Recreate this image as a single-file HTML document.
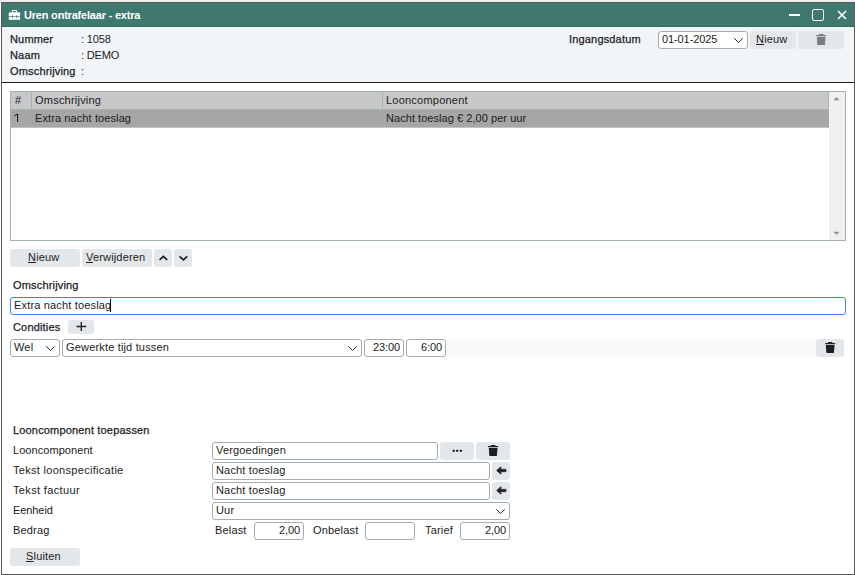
<!DOCTYPE html>
<html><head><meta charset="utf-8">
<style>
*{box-sizing:border-box;margin:0;padding:0}
html,body{width:855px;height:575px;overflow:hidden;background:#fff;font-family:"Liberation Sans",sans-serif;font-size:11px;color:#1b1b22;letter-spacing:0.17px}
.a{position:absolute}
.t{position:absolute;white-space:pre;line-height:14px;height:14px}
.m{-webkit-text-stroke:0.25px currentColor}
.btn{position:absolute;background:#e3e7ea;border-radius:3px}
.inp{position:absolute;background:#fff;border:1px solid #a3acb3;border-radius:3px}
.u{text-decoration:underline;text-underline-offset:1px}
</style></head><body>
<div class="a" style="left:0;top:0;width:855px;height:2px;background:#edf0f2"></div>
<!-- window -->
<div class="a" style="left:1px;top:2px;width:854px;height:573px;border:1px solid #5a5a5a;background:#fff"></div>
<!-- title bar -->
<div class="a" style="left:2px;top:3px;width:852px;height:24px;background:#3e786f;border-bottom:1px solid #356a61"></div>
<svg class="a" style="left:8px;top:9px" width="14" height="12" viewBox="0 0 14 12">
  <path d="M3.8 3.4V1.8Q3.8 1 4.6 1H8.2Q9 1 9 1.8V3.4H7.9V2.1H4.9V3.4z" fill="#fff"/>
  <path d="M0.8 4.6Q0.8 3.3 2.1 3.3H10.8Q12.1 3.3 12.1 4.6V7.2H0.8z" fill="#fff"/>
  <path d="M0.8 7.9H12.1V10.8H0.8z" fill="#fff"/>
  <rect x="4" y="6" width="0.85" height="2.9" rx="0.4" fill="#3e786f"/>
  <rect x="8" y="6" width="0.85" height="2.9" rx="0.4" fill="#3e786f"/>
</svg>
<div class="t" style="left:24px;top:8px;color:#fff;font-weight:bold;letter-spacing:-0.2px">Uren ontrafelaar - extra</div>
<div class="a" style="left:789px;top:14px;width:11px;height:2px;background:#fff"></div>
<div class="a" style="left:812px;top:9px;width:12px;height:12px;border:1.6px solid #fff;border-radius:2px"></div>
<svg class="a" style="left:837px;top:10px" width="10" height="10" viewBox="0 0 10 10"><path d="M1 1L9 9M9 1L1 9" stroke="#fff" stroke-width="1.6"/></svg>
<!-- header -->
<div class="a" style="left:2px;top:27px;width:852px;height:55px;background:#f2f5f8"></div>
<div class="a" style="left:2px;top:82px;width:852px;height:1px;background:#1f1f1f"></div>
<div class="t m" style="left:10px;top:32px">Nummer</div>
<div class="t m" style="left:10px;top:48px">Naam</div>
<div class="t m" style="left:10px;top:64px">Omschrijving</div>
<div class="t" style="left:81px;letter-spacing:-0.15px;top:32px">: 1058</div>
<div class="t" style="left:81px;letter-spacing:-0.15px;top:48px">: DEMO</div>
<div class="t" style="left:81px;letter-spacing:-0.15px;top:64px">:</div>
<div class="t m" style="left:569px;top:32px">Ingangsdatum</div>
<div class="inp" style="left:658px;top:31px;width:90px;height:18px"></div>
<div class="t" style="left:662px;top:32px;letter-spacing:-0.1px">01-01-2025</div>
<svg class="a" style="left:733px;top:37px" width="11" height="7" viewBox="0 0 11 7"><path d="M1.3 1.3L5.5 5.6L9.7 1.3" stroke="#2a2a2a" stroke-width="1" fill="none"/></svg>
<div class="btn" style="left:750px;top:31px;width:46px;height:18px"></div>
<div class="t" style="left:756px;top:32px"><span class="u">N</span>ieuw</div>
<div class="btn" style="left:798px;top:31px;width:46px;height:18px"></div>
<svg class="a" style="left:815px;top:33px" width="13" height="13" viewBox="0 0 13 13"><path d="M4.6 1H7.7Q8.3 1 8.5 1.6L8.7 2.1H11.1V3.2H1.2V2.1H3.6L3.8 1.6Q4 1 4.6 1z" fill="#787e86"/><path d="M1.8 3.9H10.5L10 11.3Q9.95 12 9.3 12H3Q2.35 12 2.3 11.3z" fill="#787e86"/></svg>

<!-- grid -->
<div class="a" style="left:10px;top:91px;width:836px;height:150px;border:1px solid #a3b1ba;background:#fff"></div>
<div class="a" style="left:11px;top:92px;width:818px;height:17px;background:#c8c8c8"></div>
<div class="a" style="left:11px;top:109px;width:818px;height:1px;background:#a3b1ba"></div>
<div class="a" style="left:31px;top:92px;width:1px;height:17px;background:#a3b1ba"></div>
<div class="a" style="left:382px;top:92px;width:1px;height:17px;background:#a3b1ba"></div>
<div class="a" style="left:828px;top:92px;width:1px;height:17px;background:#a3b1ba"></div>
<div class="a" style="left:11px;top:110px;width:818px;height:17px;background:#a6a6a6"></div>
<div class="a" style="left:11px;top:127px;width:818px;height:1px;background:#bcc5ca"></div>
<div class="a" style="left:829px;top:92px;width:16px;height:148px;background:#f0f0f0"></div>
<svg class="a" style="left:833px;top:96px" width="7" height="5" viewBox="0 0 7 5"><path d="M0.5 4.2L3.5 1L6.5 4.2z" fill="#8f8f8f"/></svg>
<svg class="a" style="left:833px;top:231px" width="7" height="5" viewBox="0 0 7 5"><path d="M0.5 0.8L3.5 4L6.5 0.8z" fill="#8f8f8f"/></svg>
<div class="t" style="left:15px;top:93px">#</div>
<div class="t" style="left:35px;top:93px;letter-spacing:0.22px">Omschrijving</div>
<div class="t" style="left:386px;top:93px;letter-spacing:0.22px">Looncomponent</div>
<svg class="a" style="left:13px;top:113px" width="7" height="10" viewBox="0 0 7 10"><path d="M4 1H5.1V9H4z" fill="#1b1b22"/><path d="M1.3 2.9L4.3 1.1" stroke="#1b1b22" stroke-width="1"/></svg>
<div class="t" style="left:35px;top:111px;letter-spacing:0.1px">Extra nacht toeslag</div>
<div class="t" style="left:386px;top:111px;letter-spacing:0.05px">Nacht toeslag € 2,00 per uur</div>
<!-- buttons row -->
<div class="btn" style="left:10px;top:249px;width:70px;height:18px"></div>
<div class="t" style="left:28px;top:250px"><span class="u">N</span>ieuw</div>
<div class="btn" style="left:82px;top:249px;width:70px;height:18px"></div>
<div class="t" style="left:86px;top:250px"><span class="u">V</span>erwijderen</div>
<div class="btn" style="left:154px;top:249px;width:18px;height:18px"></div>
<svg class="a" style="left:158px;top:254px" width="10" height="8" viewBox="0 0 10 8"><path d="M1.6 5.9L5.4 2.3 9.2 5.9" stroke="#1b1b22" stroke-width="1.7" fill="none"/></svg>
<div class="btn" style="left:174px;top:249px;width:18px;height:18px"></div>
<svg class="a" style="left:178px;top:254px" width="10" height="8" viewBox="0 0 10 8"><path d="M1.6 2.3L5.4 5.9 9.2 2.3" stroke="#1b1b22" stroke-width="1.7" fill="none"/></svg>
<!-- omschrijving -->
<div class="t m" style="left:13px;top:278px">Omschrijving</div>
<div class="a" style="left:10px;top:297px;width:836px;height:18px;border:1px solid #3b82f6;border-radius:3px;background:#fff"></div>
<div class="t" style="left:14px;top:298px">Extra nacht toeslag</div>
<div class="a" style="left:110px;top:299px;width:1px;height:13px;background:#000"></div>
<!-- condities -->
<div class="t m" style="left:13px;top:320px">Condities</div>
<div class="btn" style="left:68px;top:320px;width:26px;height:14px"></div>
<svg class="a" style="left:76px;top:322px" width="11" height="10" viewBox="0 0 11 10"><path d="M5.3 0.1v8.9M0.6 4.5h9.6" stroke="#1b1b22" stroke-width="1.35"/></svg>
<div class="a" style="left:446px;top:339px;width:370px;height:18px;background:#f8f9fa"></div>
<div class="inp" style="left:10px;top:339px;width:50px;height:18px"></div>
<div class="t" style="left:14px;top:340px">Wel</div>
<svg class="a" style="left:45px;top:345px" width="11" height="7" viewBox="0 0 11 7"><path d="M1.3 1.3L5.5 5.6L9.7 1.3" stroke="#2a2a2a" stroke-width="1" fill="none"/></svg>
<div class="inp" style="left:62px;top:339px;width:300px;height:18px"></div>
<div class="t" style="left:66px;top:340px">Gewerkte tijd tussen</div>
<svg class="a" style="left:347px;top:345px" width="11" height="7" viewBox="0 0 11 7"><path d="M1.3 1.3L5.5 5.6L9.7 1.3" stroke="#2a2a2a" stroke-width="1" fill="none"/></svg>
<div class="inp" style="left:364px;top:339px;width:40px;height:18px"></div>
<div class="t" style="left:364px;top:340px;width:36px;text-align:right;letter-spacing:-0.1px">23:00</div>
<div class="inp" style="left:406px;top:339px;width:40px;height:18px"></div>
<div class="t" style="left:406px;top:340px;width:36px;text-align:right;letter-spacing:-0.1px">6:00</div>
<div class="btn" style="left:816px;top:339px;width:28px;height:18px"></div>
<svg class="a" style="left:824px;top:341px" width="13" height="13" viewBox="0 0 13 13"><path d="M4.6 1H7.7Q8.3 1 8.5 1.6L8.7 2.1H11.1V3.2H1.2V2.1H3.6L3.8 1.6Q4 1 4.6 1z" fill="#1c1f24"/><path d="M1.8 3.9H10.5L10 11.3Q9.95 12 9.3 12H3Q2.35 12 2.3 11.3z" fill="#1c1f24"/></svg>
<!-- looncomponent toepassen -->
<div class="t m" style="left:13px;top:423px">Looncomponent toepassen</div>
<div class="t" style="left:13px;top:443px;letter-spacing:0.06px">Looncomponent</div>
<div class="t" style="left:13px;top:463px;letter-spacing:0.3px">Tekst loonspecificatie</div>
<div class="t" style="left:13px;top:483px;letter-spacing:0.35px">Tekst factuur</div>
<div class="t" style="left:13px;top:503px;letter-spacing:-0.08px">Eenheid</div>
<div class="t" style="left:13px;top:523px">Bedrag</div>
<div class="inp" style="left:212px;top:442px;width:226px;height:18px"></div>
<div class="t" style="left:216px;top:443px">Vergoedingen</div>
<div class="btn" style="left:440px;top:442px;width:34px;height:18px"></div>
<svg class="a" style="left:452px;top:449px" width="11" height="4" viewBox="0 0 11 4"><rect x="0.7" y="0.7" width="2.1" height="2.1" rx="0.6" fill="#111"/><rect x="4.1" y="0.7" width="2.1" height="2.1" rx="0.6" fill="#111"/><rect x="7.9" y="0.7" width="2.1" height="2.1" rx="0.6" fill="#111"/></svg>
<div class="btn" style="left:476px;top:442px;width:34px;height:18px"></div>
<svg class="a" style="left:487px;top:444px" width="13" height="13" viewBox="0 0 13 13"><path d="M4.6 1H7.7Q8.3 1 8.5 1.6L8.7 2.1H11.1V3.2H1.2V2.1H3.6L3.8 1.6Q4 1 4.6 1z" fill="#1c1f24"/><path d="M1.8 3.9H10.5L10 11.3Q9.95 12 9.3 12H3Q2.35 12 2.3 11.3z" fill="#1c1f24"/></svg>
<div class="inp" style="left:212px;top:462px;width:278px;height:18px"></div>
<div class="t" style="left:216px;top:463px">Nacht toeslag</div>
<div class="btn" style="left:492px;top:462px;width:18px;height:18px"></div>
<svg class="a" style="left:496px;top:466px" width="11" height="9" viewBox="0 0 11 9"><path d="M0.6 4.5L4.6 0.9L5.6 1.9L3.6 3.3H10V5.7H3.6L5.6 7.1L4.6 8.1z" fill="#1c1f24" stroke="#1c1f24" stroke-width="0.6" stroke-linejoin="round"/></svg>
<div class="inp" style="left:212px;top:482px;width:278px;height:18px"></div>
<div class="t" style="left:216px;top:483px">Nacht toeslag</div>
<div class="btn" style="left:492px;top:482px;width:18px;height:18px"></div>
<svg class="a" style="left:496px;top:486px" width="11" height="9" viewBox="0 0 11 9"><path d="M0.6 4.5L4.6 0.9L5.6 1.9L3.6 3.3H10V5.7H3.6L5.6 7.1L4.6 8.1z" fill="#1c1f24" stroke="#1c1f24" stroke-width="0.6" stroke-linejoin="round"/></svg>
<div class="inp" style="left:212px;top:502px;width:298px;height:18px"></div>
<div class="t" style="left:216px;top:503px">Uur</div>
<svg class="a" style="left:495px;top:508px" width="11" height="7" viewBox="0 0 11 7"><path d="M1.3 1.3L5.5 5.6L9.7 1.3" stroke="#2a2a2a" stroke-width="1" fill="none"/></svg>
<div class="t" style="left:215px;top:523px">Belast</div>
<div class="inp" style="left:254px;top:522px;width:50px;height:18px"></div>
<div class="t" style="left:254px;top:523px;width:46px;text-align:right;letter-spacing:-0.1px">2,00</div>
<div class="t" style="left:313px;top:523px">Onbelast</div>
<div class="inp" style="left:365px;top:522px;width:50px;height:18px"></div>
<div class="t" style="left:425px;top:523px">Tarief</div>
<div class="inp" style="left:460px;top:522px;width:50px;height:18px"></div>
<div class="t" style="left:460px;top:523px;width:46px;text-align:right;letter-spacing:-0.1px">2,00</div>
<!-- sluiten -->
<div class="btn" style="left:10px;top:548px;width:70px;height:18px"></div>
<div class="t" style="left:26px;top:549px"><span class="u">S</span>luiten</div>
</body></html>
